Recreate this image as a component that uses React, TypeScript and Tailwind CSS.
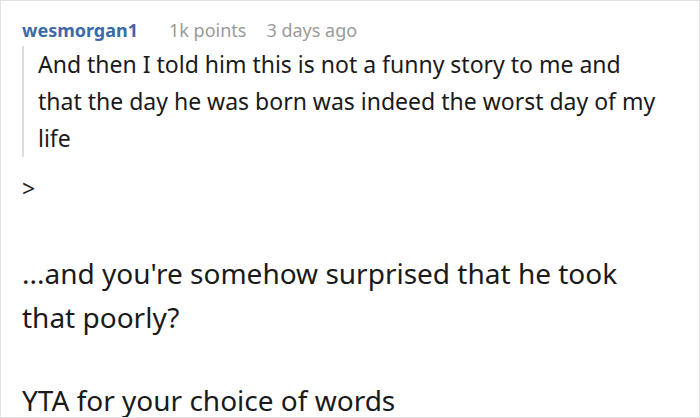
import React from "react";

export default function App() {
  return (
    <div
      className="w-[700px] h-[418px] overflow-hidden bg-white border border-[#e3e3e3] text-[#1a1a1b]"
      style={{ fontFamily: '"Noto Sans", "Open Sans", sans-serif' }}
    >
      <div className="pl-[21px] pr-[30px] pt-[16px]">
        {/* header */}
        <div className="flex items-baseline text-[18px] leading-[26px]">
          <span className="font-bold text-[#3c6aa7]">wesmorgan1</span>
          <span className="ml-[31px] text-[#9a9a9a]">1k points</span>
          <span className="ml-[20px] text-[#9a9a9a]">3 days ago</span>
        </div>

        {/* quote */}
        <div className="mt-[3px] border-l-[2px] border-[#dcdcdc] pl-[14px] text-[23px] leading-[37px] pr-[10px]">
          And then I told him this is not a funny story to me and that the day he was born was indeed the worst day of my life
        </div>

        <p className="mt-[13px] text-[23px] leading-[37px]">&gt;</p>

        <p className="mt-[44px] text-[28px] leading-[44px] pr-[20px]">
          ...and you're somehow surprised that he took that poorly?
        </p>

        <p className="mt-[39px] text-[28px] leading-[44px]">YTA for your choice of words</p>
      </div>
    </div>
  );
}
